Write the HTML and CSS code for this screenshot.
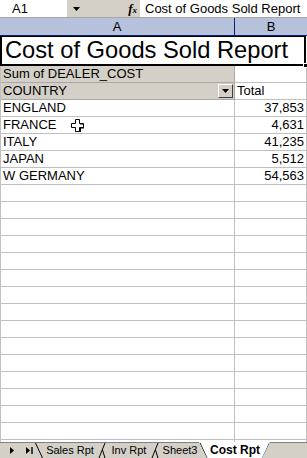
FILE: index.html
```html
<!DOCTYPE html>
<html>
<head>
	<meta charset="utf-8">
	<title>Cost of Goods Sold Report</title>
	<link rel="stylesheet" href="styles.css">
</head>
<body>
	<div class="fbar">
		<div class="namebox">A1</div>
		<div class="fbar-mid">
			<svg class="dd" width="7" height="4" viewBox="0 0 7 4"><path d="M0 0h7L3.5 4z" fill="#000"/></svg>
			<span class="fx">f<small>x</small></span>
		</div>
		<div class="fbar-text">Cost of Goods Sold Report</div>
	</div>
	<div class="colhead">
		<div class="ch ch-a">A</div>
		<div class="ch">B</div>
	</div>
	<div class="sheet">
		<div class="title">Cost of Goods Sold Report<i class="handle"></i></div>
		<div class="row"><div class="a pv">Sum of DEALER_COST</div><div class="b"></div></div>
		<div class="row"><div class="a pv">COUNTRY<span class="pvbtn"><svg width="7" height="4" viewBox="0 0 7 4"><path d="M0 0h7L3.5 4z" fill="#000"/></svg></span></div><div class="b">Total</div></div>
		<div class="row"><div class="a">ENGLAND</div><div class="b num">37,853</div></div>
		<div class="row"><div class="a">FRANCE
			<svg class="cursor" width="13" height="13" viewBox="0 0 13 13"><path d="M4.5 0.5h4v4h4v4h-4v4h-4v-4h-4v-4h4z" fill="#fff" stroke="#000"/><path d="M9 5h3M9 9h4v-3.5M5 13h4.5V9" fill="none" stroke="#000"/></svg>
		</div><div class="b num">4,631</div></div>
		<div class="row"><div class="a">ITALY</div><div class="b num">41,235</div></div>
		<div class="row"><div class="a">JAPAN</div><div class="b num">5,512</div></div>
		<div class="row"><div class="a">W GERMANY</div><div class="b num">54,563</div></div>
		<div class="row"><div class="a"></div><div class="b"></div></div>
		<div class="row"><div class="a"></div><div class="b"></div></div>
		<div class="row"><div class="a"></div><div class="b"></div></div>
		<div class="row"><div class="a"></div><div class="b"></div></div>
		<div class="row"><div class="a"></div><div class="b"></div></div>
		<div class="row"><div class="a"></div><div class="b"></div></div>
		<div class="row"><div class="a"></div><div class="b"></div></div>
		<div class="row"><div class="a"></div><div class="b"></div></div>
		<div class="row"><div class="a"></div><div class="b"></div></div>
		<div class="row"><div class="a"></div><div class="b"></div></div>
		<div class="row"><div class="a"></div><div class="b"></div></div>
		<div class="row"><div class="a"></div><div class="b"></div></div>
		<div class="row"><div class="a"></div><div class="b"></div></div>
		<div class="row"><div class="a"></div><div class="b"></div></div>
		<div class="row"><div class="a"></div><div class="b"></div></div>
		<div class="row"><div class="a"></div><div class="b"></div></div>
	</div>
	<div class="tabbar">
		<div class="tabnav">
			<svg width="4" height="7" viewBox="0 0 4 7"><path d="M0 0v7l4-3.5z" fill="#000"/></svg>
			<svg width="7" height="7" viewBox="0 0 7 7"><path d="M0 0v7l4-3.5z" fill="#000"/><path d="M6 0v7" stroke="#000" stroke-width="1.4"/></svg>
		</div>
		<svg class="sep" width="8" height="15" viewBox="0 0 8 15"><path d="M0.5 0l7 15" stroke="#000" fill="none"/></svg>
		<span class="tab t1">Sales Rpt</span>
		<svg class="sep" width="11" height="15" viewBox="0 0 11 15"><path d="M8 0l-6 15M5.5 7l2.5 8" stroke="#000" fill="none"/></svg>
		<span class="tab t2">Inv Rpt</span>
		<svg class="sep" width="11" height="15" viewBox="0 0 11 15"><path d="M8 0l-6 15M5.5 7l2.5 8" stroke="#000" fill="none"/></svg>
		<span class="tab t3">Sheet3</span>
		<div class="active">
			<svg class="sep" width="9" height="15" viewBox="0 0 9 15"><path d="M1 0l7 15" stroke="#000" fill="none"/></svg>
			<span class="tab t4">Cost Rpt</span>
			<svg class="sep" width="8" height="15" viewBox="0 0 8 15"><path d="M7.5 0l-7 15" stroke="#000" fill="none"/></svg>
		</div>
	</div>
</body>
</html>
```
FILE: styles.css
```css
* {
	margin: 0;
	padding: 0;
	box-sizing: border-box;
}
body {
	width: 307px;
	height: 458px;
	overflow: hidden;
	display: flex;
	flex-direction: column;
	font: 13px/16px "Liberation Sans", Arial, sans-serif;
	color: #000;
	background: #fff;
}
/* formula bar */
.fbar {
	display: flex;
	height: 17px;
	line-height: 17px;
}
.namebox {
	width: 67px;
	padding-left: 12px;
	background: #fff;
}
.fbar-mid {
	width: 73px;
	background: #d4d0c8;
	display: flex;
	align-items: center;
	justify-content: space-between;
	padding: 0 3px 0 6px;
}
.dd {
	margin-top: 1px;
}
.fx {
	font: italic bold 13px "Liberation Serif", serif;
}
.fx small {
	font-size: 9px;
}
.fbar-text {
	flex: 1;
	padding-left: 5px;
	white-space: nowrap;
}
/* column headers */
.colhead {
	display: flex;
	height: 19px;
	border-top: 1px solid #a6a6a6;
	border-bottom: 1px solid #0a246a;
	background: #b6c1dc;
	line-height: 17px;
}
.ch {
	flex: 1;
	text-align: center;
}
.ch-a {
	flex: 0 0 235px;
	border-right: 1px solid #0a246a;
}
/* grid */
.sheet {
	flex: 1;
	overflow: hidden;
}
.title {
	position: relative;
	height: 30px;
	margin-right: 1px;
	border: 2px solid #000;
	border-top-width: 1px;
	padding-left: 3px;
	font-size: 23.7px;
	line-height: 26px;
	white-space: nowrap;
}
.handle {
	position: absolute;
	right: -4px;
	bottom: -4px;
	width: 5px;
	height: 5px;
	background: #000;
	border: 1px solid #fff;
}
.row {
	display: flex;
	height: 17px;
	border-left: 1px solid #c0c0c0;
}
.a, .b {
	border-right: 1px solid #c0c0c0;
	border-bottom: 1px solid #c0c0c0;
	padding-left: 2px;
	white-space: nowrap;
}
.a {
	position: relative;
	flex: 0 0 234px;
}
.b {
	flex: 1;
}
.num {
	text-align: right;
	padding-right: 2px;
}
.pv {
	background: #d4d0c8;
	border-color: #a8a8a8;
}
.pvbtn {
	position: absolute;
	right: 1px;
	top: 1px;
	width: 15px;
	height: 14px;
	background: #d4d0c8;
	border: 1px solid;
	border-color: #fff #404040 #404040 #fff;
	display: flex;
	align-items: center;
	justify-content: center;
}
.cursor {
	position: absolute;
	left: 70px;
	top: 2px;
}
/* sheet tabs */
.tabbar {
	display: flex;
	align-items: flex-start;
	height: 16px;
	background: #d4d0c8;
	border-top: 1px solid #808080;
	font-size: 11px;
	line-height: 14px;
}
.tabnav {
	width: 35px;
	height: 15px;
	display: flex;
	align-items: center;
	gap: 12px;
	padding-left: 10px;
}
.sep {
	display: block;
	flex: none;
}
.tab {
	text-align: center;
	white-space: nowrap;
}
.t1 { width: 54px; }
.t2 { width: 42px; }
.t3 { width: 38px; }
.t4 {
	width: 54px;
	font-weight: bold;
	font-size: 12px;
}
.active {
	display: flex;
	margin-top: -1px;
	padding-top: 1px;
	background: #fff;
	clip-path: polygon(0 0, 100% 0, calc(100% - 8px) 100%, 8px 100%);
}
```
